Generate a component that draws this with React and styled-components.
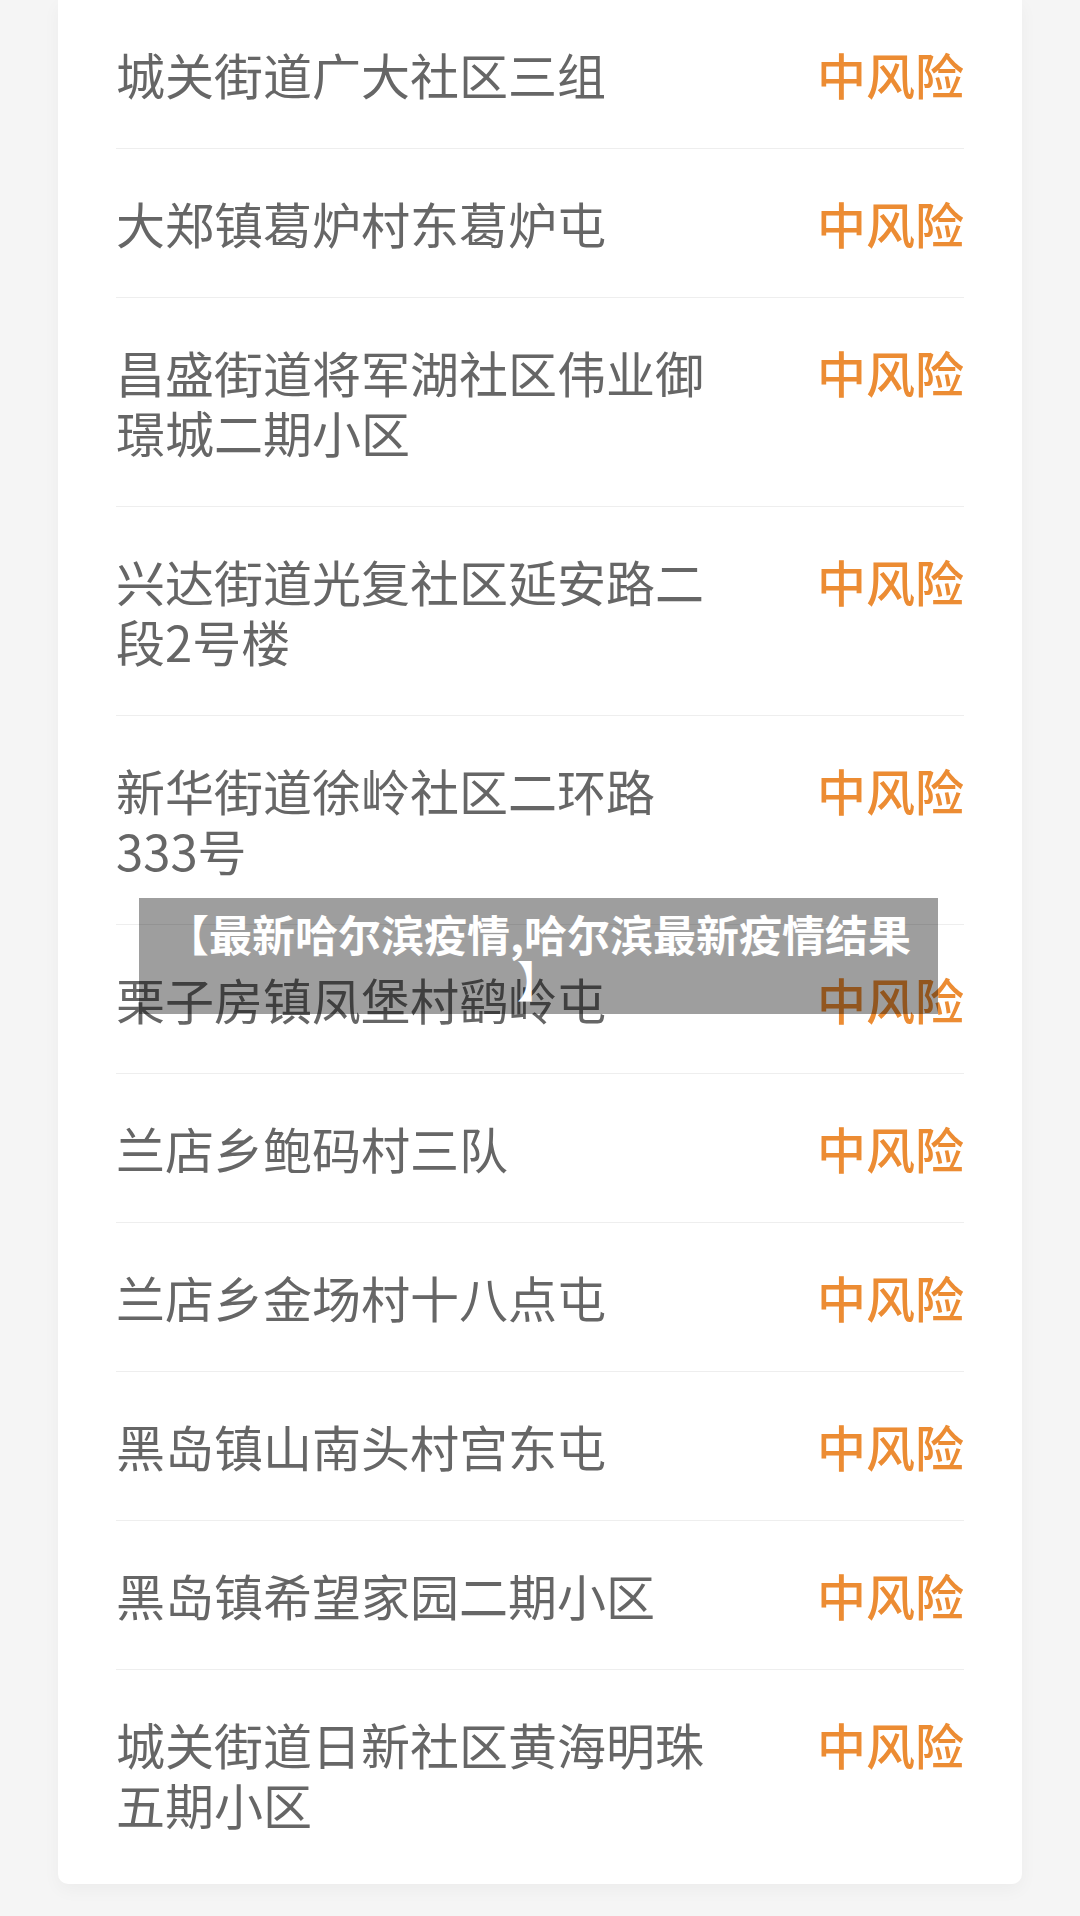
import React from "react";
import styled, { createGlobalStyle } from "styled-components";

const GlobalStyle = createGlobalStyle`
  html, body {
    margin: 0;
    padding: 0;
    background: #f5f5f5;
  }
`;

const Page = styled.div`
  position: relative;
  width: 1080px;
  min-height: 1916px;
  box-sizing: border-box;
  padding: 0 58px 34px;
  background: #f5f5f5;
  font-family: "Noto Sans CJK SC", "Noto Sans", sans-serif;
`;

const Card = styled.div`
  background: #fff;
  border-radius: 0 0 10px 10px;
  padding: 0 58px;
  box-shadow: 0 6px 18px rgba(0, 0, 0, 0.04);
`;

const Row = styled.div`
  display: flex;
  align-items: flex-start;
  justify-content: space-between;
  padding: 44px 0;
  border-bottom: 1px solid #eeeeee;

  &:last-child {
    border-bottom: none;
    padding-bottom: 50px;
  }
`;

const Place = styled.div`
  max-width: 610px;
  font-size: 49px;
  line-height: 60px;
  color: #666666;
  font-weight: 400;
`;

const Risk = styled.div`
  flex-shrink: 0;
  font-size: 49px;
  line-height: 60px;
  color: #ec8c33;
  font-weight: 500;
`;

const Banner = styled.div`
  position: absolute;
  top: 898px;
  left: 139px;
  width: 799px;
  box-sizing: border-box;
  padding: 12px 20px;
  background: rgba(0, 0, 0, 0.38);
  color: #fff;
  font-size: 43px;
  line-height: 46px;
  font-weight: 700;
  text-align: center;
  line-break: anywhere;
`;

const places = [
  "城关街道广大社区三组",
  "大郑镇葛炉村东葛炉屯",
  "昌盛街道将军湖社区伟业御璟城二期小区",
  "兴达街道光复社区延安路二段2号楼",
  "新华街道徐岭社区二环路333号",
  "栗子房镇凤堡村鹞岭屯",
  "兰店乡鲍码村三队",
  "兰店乡金场村十八点屯",
  "黑岛镇山南头村宫东屯",
  "黑岛镇希望家园二期小区",
  "城关街道日新社区黄海明珠五期小区",
];

export default function App() {
  return (
    <>
      <GlobalStyle />
      <Page>
        <Card>
          {places.map((p) => (
            <Row key={p}>
              <Place>{p}</Place>
              <Risk>中风险</Risk>
            </Row>
          ))}
        </Card>
        <Banner>【最新哈尔滨疫情,哈尔滨最新疫情结果】</Banner>
      </Page>
    </>
  );
}
